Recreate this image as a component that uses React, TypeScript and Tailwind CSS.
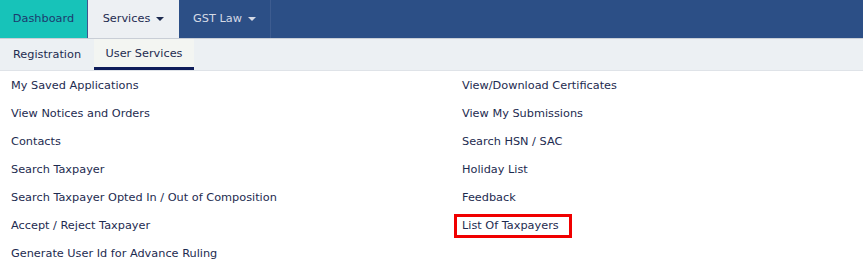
const leftLinks = [
  "My Saved Applications",
  "View Notices and Orders",
  "Contacts",
  "Search Taxpayer",
  "Search Taxpayer Opted In / Out of Composition",
  "Accept / Reject Taxpayer",
  "Generate User Id for Advance Ruling",
];

const rightLinks = [
  "View/Download Certificates",
  "View My Submissions",
  "Search HSN / SAC",
  "Holiday List",
  "Feedback",
  "List Of Taxpayers",
];

const Caret = () => (
  <span className="ml-[6px] inline-block h-0 w-0 border-x-[4px] border-t-[4px] border-x-transparent border-t-current align-middle" />
);

const App = () => {
  return (
    <div className="h-[264px] w-[863px] overflow-hidden bg-white font-['DejaVu_Sans',sans-serif] text-[11.3px] text-[#1d2b50]">
      {/* top menu */}
      <nav className="flex h-[38px] bg-[#2c4f86]">
        <div className="flex w-[88px] items-center justify-center border-r border-[#3f568f] bg-[#17c3b9] text-[#1d3a6e]">
          Dashboard
        </div>
        <div className="flex w-[91px] items-center justify-center bg-[#edf0f3] text-[#1d2b50]">
          Services <Caret />
        </div>
        <div className="flex w-[92px] items-center justify-center border-r border-[#3d5c90] text-[#d5dae5]">
          GST Law <Caret />
        </div>
      </nav>

      {/* sub menu */}
      <div className="flex h-[33px] border-t border-[#c9ced6] border-b border-b-[#dfe3e8] bg-[#ecf0f3]">
        <div className="flex w-[94px] items-center justify-center pt-[2px]">Registration</div>
        <div className="flex w-[100px] items-center justify-center border-b-[3px] border-[#0f1d5a] bg-[#f3f5f2] pt-[2px]">
          User Services
        </div>
      </div>

      {/* links */}
      <div className="grid grid-cols-[451px_1fr] pt-[1px]">
        <ul className="flex flex-col pl-[11px]">
          {leftLinks.map((l) => (
            <li key={l} className="flex h-[28px] items-center">
              {l}
            </li>
          ))}
        </ul>
        <ul className="flex flex-col">
          {rightLinks.map((l) => (
            <li key={l} className="flex h-[28px] items-center">
              {l === "List Of Taxpayers" ? (
                <span className="ml-[3px] flex h-[24px] w-[118px] items-center border-[3px] border-[#f00000] pl-[5px]">
                  {l}
                </span>
              ) : (
                <span className="pl-[11px]">{l}</span>
              )}
            </li>
          ))}
        </ul>
      </div>
    </div>
  );
};

export default App;
